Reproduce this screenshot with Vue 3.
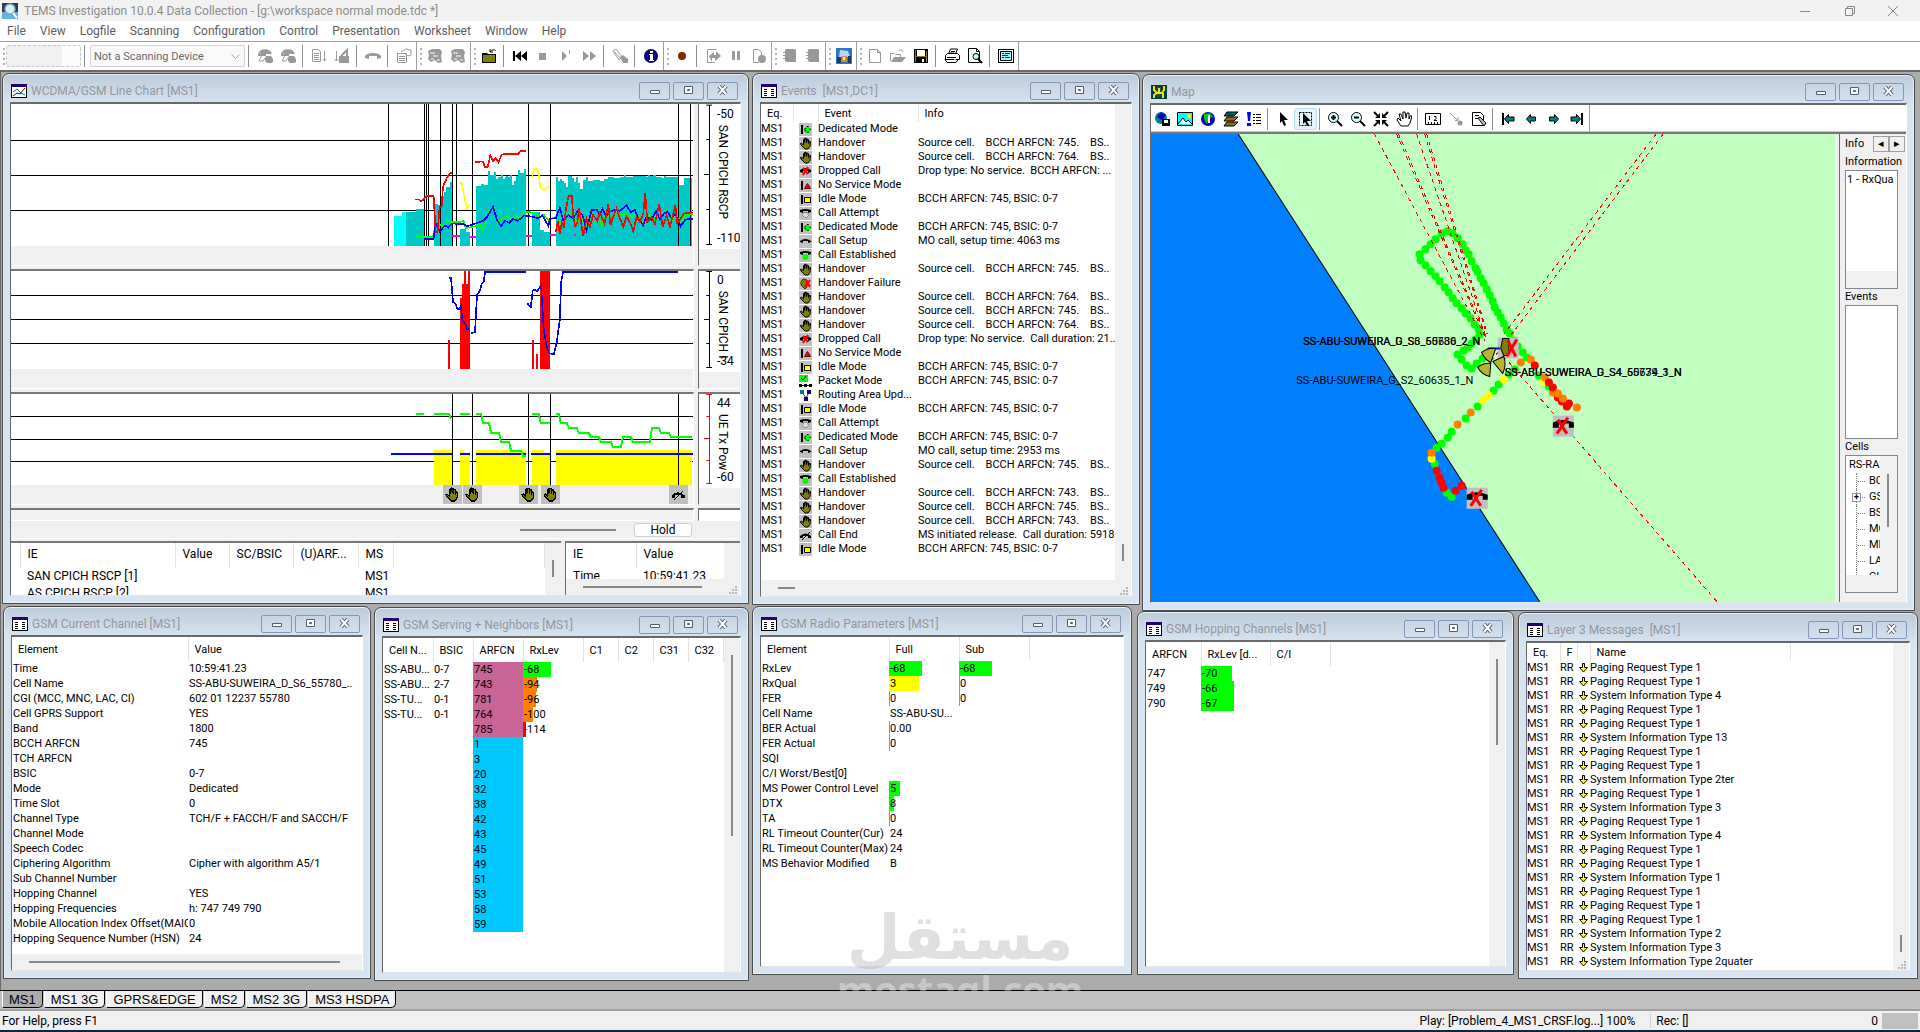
<script setup>
const menus = ['File', 'View', 'Logfile', 'Scanning', 'Configuration', 'Control', 'Presentation', 'Worksheet', 'Window', 'Help']

// Toolbar groups; "|" is a separator line
const toolGroups = [
  ['phone', 'phone', '|', 'doclist', 'doclock', '|', 'handset', '|', 'props'],
  ['phones', 'phones'],
  ['folder', '|', 'rewind', 'stop', 'play', 'forward', '|', 'marker', '|', 'info'],
  ['record', '|', 'swap', 'pause', 'docdot'],
  ['book', 'book'],
  ['picture'],
  ['newdoc', 'open', 'save', '|', 'print', 'preview', '|', 'report'],
]

const windows = [
  { id: 'chart', title: 'WCDMA/GSM Line Chart [MS1]', icon: 'w-chart', x: 2, y: 3, w: 747, h: 531 },
  { id: 'events', title: 'Events  [MS1,DC1]', icon: 'w-list', x: 752, y: 3, w: 388, h: 532 },
  { id: 'map', title: 'Map', icon: 'w-map', x: 1142, y: 4, w: 773, h: 537 },
  { id: 'current', title: 'GSM Current Channel [MS1]', icon: 'w-list', x: 3, y: 536, w: 368, h: 373 },
  { id: 'serving', title: 'GSM Serving + Neighbors [MS1]', icon: 'w-list', x: 374, y: 537, w: 375, h: 374 },
  { id: 'radio', title: 'GSM Radio Parameters [MS1]', icon: 'w-list', x: 752, y: 536, w: 380, h: 369 },
  { id: 'hopping', title: 'GSM Hopping Channels [MS1]', icon: 'w-list', x: 1137, y: 541, w: 377, h: 364 },
  { id: 'layer3', title: 'Layer 3 Messages  [MS1]', icon: 'w-list', x: 1518, y: 542, w: 400, h: 367 },
]

const nb = '\u00a0'
const src = n => `Source cell.${nb}${nb}${nb}${nb}BCCH ARFCN: ${n}.${nb}${nb}${nb}${nb}BS..`
const idle = 'BCCH ARFCN: 745, BSIC: 0-7'
const events = [
  ['e-ded', 'Dedicated Mode', ''],
  ['e-hand', 'Handover', src(745)],
  ['e-hand', 'Handover', src(764)],
  ['e-drop', 'Dropped Call', `Drop type: No service.${nb} BCCH ARFCN: ...`],
  ['e-noserv', 'No Service Mode', ''],
  ['e-idle', 'Idle Mode', idle],
  ['e-attempt', 'Call Attempt', ''],
  ['e-ded', 'Dedicated Mode', idle],
  ['e-setup', 'Call Setup', 'MO call, setup time: 4063 ms'],
  ['e-est', 'Call Established', ''],
  ['e-hand', 'Handover', src(745)],
  ['e-fail', 'Handover Failure', ''],
  ['e-hand', 'Handover', src(764)],
  ['e-hand', 'Handover', src(745)],
  ['e-hand', 'Handover', src(764)],
  ['e-drop', 'Dropped Call', `Drop type: No service.${nb} Call duration: 21...`],
  ['e-noserv', 'No Service Mode', ''],
  ['e-idle', 'Idle Mode', idle],
  ['e-packet', 'Packet Mode', idle],
  ['e-route', 'Routing Area Upd...', ''],
  ['e-idle', 'Idle Mode', idle],
  ['e-attempt', 'Call Attempt', ''],
  ['e-ded', 'Dedicated Mode', idle],
  ['e-setup', 'Call Setup', 'MO call, setup time: 2953 ms'],
  ['e-hand', 'Handover', src(745)],
  ['e-est', 'Call Established', ''],
  ['e-hand', 'Handover', src(743)],
  ['e-hand', 'Handover', src(745)],
  ['e-hand', 'Handover', src(743)],
  ['e-end', 'Call End', `MS initiated release.${nb} Call duration: 5918..`],
  ['e-idle', 'Idle Mode', idle],
]

const current = [
  ['Time', '10:59:41.23'],
  ['Cell Name', 'SS-ABU-SUWEIRA_D_S6_55780_..'],
  ['CGI (MCC, MNC, LAC, CI)', '602 01 12237 55780'],
  ['Cell GPRS Support', 'YES'],
  ['Band', '1800'],
  ['BCCH ARFCN', '745'],
  ['TCH ARFCN', ''],
  ['BSIC', '0-7'],
  ['Mode', 'Dedicated'],
  ['Time Slot', '0'],
  ['Channel Type', 'TCH/F + FACCH/F and SACCH/F'],
  ['Channel Mode', ''],
  ['Speech Codec', ''],
  ['Ciphering Algorithm', 'Cipher with algorithm A5/1'],
  ['Sub Channel Number', ''],
  ['Hopping Channel', 'YES'],
  ['Hopping Frequencies', 'h: 747 749 790'],
  ['Mobile Allocation Index Offset(MAIO)', '0'],
  ['Hopping Sequence Number (HSN)', '24'],
]

const green = '#00ff00'
const serving = [
  ['SS-ABU...', '0-7', 745, -68, 28, green],
  ['SS-ABU...', '2-7', 743, -94, 14, '#ff8000'],
  ['SS-TU...', '0-1', 781, -96, 13, '#ff8000'],
  ['SS-TU...', '0-1', 764, -100, 10, '#ff8000'],
  ['', '', 785, -114, 3, '#ff0000'],
  ...[1, 3, 20, 32, 38, 42, 43, 45, 49, 51, 53, 58, 59].map(n => ['', '', n, '', 0, green]),
]

const radio = [
  { name: 'RxLev', full: '-68', fw: 33, sub: '-68', sw: 33 },
  { name: 'RxQual', full: '3', fw: 30, fc: '#ffff00', sub: '0', sw: 1 },
  { name: 'FER', full: '0', fw: 1, sub: '0', sw: 1 },
  { name: 'Cell Name', full: 'SS-ABU-SU...' },
  { name: 'BER Actual', full: '0.00', fw: 1 },
  { name: 'FER Actual', full: '0', fw: 1 },
  { name: 'SQI' },
  { name: 'C/I Worst/Best[0]' },
  { name: 'MS Power Control Level', full: '5', fw: 11 },
  { name: 'DTX', full: '8', fw: 5 },
  { name: 'TA', full: '0', fw: 1 },
  { name: 'RL Timeout Counter(Cur)', full: '24' },
  { name: 'RL Timeout Counter(Max)', full: '24' },
  { name: 'MS Behavior Modified', full: 'B' },
]

const hopping = [[747, -70, 31], [749, -66, 33], [790, -67, 33]]

const P = 'Paging Request Type 1'
const S = t => 'System Information Type ' + t
const layer3 = [P, P, S(4), P, P, S(13), P, P, S('2ter'), P, S(3), P, S(4), P, P, S(1), P, P, P, S(2), S(3), S('2quater')]

// Chart drawing units: three per pixel
const verticals = [85, 193, 199, 205, 241, 277, 289, 337, 505, 571, 955, 991]
const verticals3 = [277, 337, 505, 571, 955]
const rscpBars = 'M138 468V366H168V357H192V468ZM222 468V342H234V346H240V350H246V318H252V306H258V292H264V290H270V276H276V468ZM300 468V416H318V424H330V468ZM348 468V288H365V282H372V284H384V243H390V255H402V247H408V268H414V262H424V255H430V267H436V262H440V258H446V262H452V256H456V285H462V272H468V258H474V240H480V249H492V237H498V468ZM516 468V367H540V418H552V424H571V468ZM588 468V261H594V272H600V267H606V274H612V278H620V292H625V258H636V263H642V276H648V262H654V280H660V297H668V270H678V262H684V272H700V269H720V274H732V268H745V262H762V264H780V260H792V256H798V260H820V257H858V260H864V255H870V259H880V256H888V260H905V264H912V257H918V262H955V286H972V264H995V468Z'
const redMain = '588,425 594,392 600,430 606,396 612,410 618,360 626,318 636,318 640,380 646,408 652,400 658,355 670,438 680,385 690,410 700,375 712,392 720,368 734,400 745,342 752,405 760,380 770,355 780,385 790,410 800,380 812,400 820,425 830,380 840,395 850,370 856,308 862,395 875,380 885,400 898,342 908,410 920,375 930,410 946,344 952,400 972,370 998,367'
const blueMain = '192,446 222,446 228,400 240,424 256,406 266,412 276,400 312,402 322,408 348,400 370,392 382,380 400,350 412,390 424,408 436,392 448,398 460,386 474,392 494,376 520,380 536,384 548,376 566,408 570,386 588,384 600,352 610,390 625,375 640,385 655,360 668,375 680,420 695,360 710,358 720,372 728,356 738,378 750,365 765,358 780,362 800,346 812,366 825,360 835,385 850,405 860,378 875,390 888,362 900,388 912,370 922,364 935,385 946,370 962,408 976,388 998,386'
const greenMain = '168,440 220,440 228,400 240,402 252,412 262,396 300,396 312,392 318,414 348,408 360,400 370,420 376,396 388,362 404,354 412,394 430,384 444,376 456,392 470,380 480,384 490,364 526,368 540,380 552,374 566,390 588,380 600,402 612,375 625,370 640,366 650,398 665,372 675,415 690,385 705,395 715,380 725,405 740,370 755,395 770,365 785,375 800,372 815,380 830,370 845,398 860,390 870,375 882,395 894,358 908,372 920,362 935,392 946,366 960,402 975,375 998,372'
const txPower = ['168,972 192,972', '222,972 268,972 274,986', '300,972 330,972', '348,972 364,972 370,999 388,999 394,1029 418,1029 424,1056 448,1056 454,1083 484,1083 490,1098 498,1098', '516,972 537,972 543,999 571,999', '588,972 597,972 603,999 621,999 627,1014 651,1014 657,1029 687,1029 693,1041 717,1041 723,1056 753,1056 759,1071 783,1071 789,1041 813,1041 819,1056 870,1056 876,1014 897,1014 903,1029 927,1029 933,1041 996,1041']
const markers = [[277, 'e-hand'], [337, 'e-hand'], [505, 'e-hand'], [571, 'e-hand'], [955, 'e-end']]

// Drive route in survey units, projected onto the map canvas
const project = ([u, v]) => [Math.round((u - 22) / 2.01), Math.round((v - 192) / 3)]
const route = [
  ['#00ff00', [[617, 483], [605, 490], [593, 508], [583, 522], [573, 538], [561, 553], [563, 570], [573, 586], [583, 603], [592, 618], [600, 633], [610, 650], [619, 667], [627, 683], [636, 698], [645, 714], [654, 730], [663, 745], [671, 763], [680, 778], [681, 792], [673, 806], [665, 820], [657, 832], [649, 840], [637, 853], [645, 868], [655, 885], [665, 893], [676, 880], [687, 865], [627, 490], [637, 505], [648, 522], [653, 540], [659, 553], [665, 572], [673, 593], [677, 607], [683, 623], [690, 640], [696, 658], [702, 675], [708, 692], [712, 710], [718, 725], [724, 742], [730, 760], [736, 776], [742, 790], [750, 810], [758, 828], [768, 846], [775, 860], [800, 915], [819, 948], [751, 897], [740, 912], [720, 943], [710, 960], [677, 1009], [653, 1045], [625, 1084], [616, 1101], [605, 1118], [595, 1132], [591, 1180], [615, 1267], [625, 1277]]],
  ['#ffff00', [[809, 933], [729, 928], [699, 976], [687, 991], [585, 1164]]],
  ['#ff8000', [[784, 868], [763, 877], [811, 920], [829, 965], [664, 1027], [638, 1063], [584, 1147], [876, 1012]]],
  ['#ff0000', [[791, 886], [820, 937], [829, 952], [838, 980], [847, 993], [861, 1000], [857, 1009], [595, 1199], [601, 1220], [605, 1235], [609, 1250], [634, 1260], [645, 1246]]],
  ['#ff8000', [[839, 970], [849, 985]]],
]
const dots = route.flatMap(([c, pts]) => pts.map(p => [...project(p), c]))
const links = [[223, 0, 333, 206], [245, 0, 333, 202], [247, 0, 335, 204], [265, 0, 334, 202], [273, 0, 335, 200], [275, 0, 336, 200], [504, 0, 352, 200], [511, 0, 340, 226], [352, 222, 565, 467]]
const dropped = [[401, 281], [315, 353]]
const mapTools = ['m-save', 'm-image', 'm-globe', 'm-layers', 'm-legend', '|', 'm-arrow', 'm-select', '|', 'm-zoomin', 'm-zoomout', 'm-center', 'm-pan', '|', 'm-ruler', 'm-path', 'm-edit', '|', 'm-first', 'm-prev', 'm-next', 'm-last']
const tree = ['RS-RANGE', 'BCCH', 'GSM', 'BSIC', 'MCC', 'MNC', 'LAC', 'CI']
const tabs = ['MS1', 'MS1 3G', 'GPRS&EDGE', 'MS2', 'MS2 3G', 'MS3 HSDPA']
</script>

<template>
  <div class="app">
    <svg class="sprite" aria-hidden="true">
      <symbol id="w-list" viewBox="0 0 16 14"><path fill="#000" d="M0 0h16v14H0z" /><path fill="#23006b" d="M0 0h16v3H0z" /><path fill="#fff" d="M1 3h14v10H1z" /><path stroke="#000" d="M3 5.500h3M3 7.500h3M3 9.500h3M3 11.500h3M10 5.500h3M10 7.500h3M10 9.500h3M10 11.500h3" /></symbol>
      <symbol id="w-chart" viewBox="0 0 16 14"><path fill="#000" d="M0 0h16v14H0z" /><path fill="#23006b" d="M0 0h16v3H0z" /><path fill="#fff" d="M1 3h14v10H1z" /><path fill="none" stroke="#800000" d="M2 12l4-3 3 1 5-6" /><path fill="none" stroke="#008060" d="M2 8l4-3 4 4 4 2" /></symbol>
      <symbol id="w-map" viewBox="0 0 16 14"><path fill="#003c50" d="M0 0h16v14H0z" /><path fill="#006040" d="M6 2h4v10H6z" /><path fill="none" stroke="#ffe000" stroke-width="2" d="M3 1v4l3 3h5l2-3V1M3 13v-3l3-2M8 3v5M12 8v5" /></symbol>
      <symbol id="i-phone" viewBox="0 0 16 16"><path fill="none" stroke="#999" stroke-width="2" d="M2 6c2-5 10-5 12 0" /><path fill="#999" d="M4 3h8l2 3H9v2H1V6h3zM9 8h5l2 3v3l-2 1h-4l-2-2v-3z" /><path stroke="#999" d="M5 7l-3 6h4l2-3" fill="none" /></symbol>
      <symbol id="i-phones" viewBox="0 0 16 16"><path fill="#999" d="M1 3l4-2h8l2 3-1 4 1 6-4 1-3-3-4 2-3-3 1-4z" /><path stroke="#fff" d="M3 5h5M6 8h5M4 11h3M10 12h3" /></symbol>
      <symbol id="i-doclist" viewBox="0 0 16 16"><path fill="none" stroke="#999" d="M1.500 1.500h6l2 2v10h-8zM3 5.500h5M3 7.500h5M3 9.500h5M3 11.500h5M13.500 3v10M11.500 11l2 2 2-2" /></symbol>
      <symbol id="i-doclock" viewBox="0 0 16 16"><path fill="none" stroke="#999" d="M2.500 3v10M.5 11l2 2 2-2" /><path fill="#999" d="M5 8h10v7H5z" /><path fill="none" stroke="#999" stroke-width="2" d="M7 8l6-6v7" /></symbol>
      <symbol id="i-handset" viewBox="0 0 16 16"><path fill="#999" d="M0 10V8c2-4 14-4 16 0v2l-4 1V8H4v3z" /></symbol>
      <symbol id="i-props" viewBox="0 0 16 16"><path fill="none" stroke="#999" d="M1.500 5.500h9v9h-9zM3 8.500h6M3 10.500h6M3 12.500h6M5 4l5-3 5 1v5l-3 1-4-3" /></symbol>
      <symbol id="i-folder" viewBox="0 0 16 16"><path fill="#000" d="M1 5h5l1 1h8v9H1z" /><path fill="#808000" d="M2 7h12v7H2z" /><path fill="none" stroke="#000" d="M9.500 3.500c1-2 4-2 5-1M9 1v3h3" /></symbol>
      <symbol id="i-rewind" viewBox="0 0 16 16"><path d="M1 3h2v10H1zM9 3v10L3 8zM15 3v10L9 8z" /></symbol>
      <symbol id="i-stop" viewBox="0 0 16 16"><path fill="#999" d="M4 5h7v7H4z" /></symbol>
      <symbol id="i-play" viewBox="0 0 16 16"><path fill="#999" d="M4 3l5 5-5 5zM11 2h1v4h-1z" /></symbol>
      <symbol id="i-forward" viewBox="0 0 16 16"><path fill="#999" d="M2 3l6 5-6 5zM9 3l6 5-6 5z" /></symbol>
      <symbol id="i-marker" viewBox="0 0 16 16"><path fill="none" stroke="#999" stroke-width="1" d="M1 3l3-2 6 8-3 3zM3 4l5 6" /><path fill="#999" d="M8 9l3-2 5 4v4h-5z" /></symbol>
      <symbol id="i-info" viewBox="0 0 16 16"><circle cx="8" cy="8" r="7" fill="#0a006e" /><path fill="#fff" d="M7 3h3v2H7zM6 6h4v6h1v1H6v-1h1V7H6z" /></symbol>
      <symbol id="i-record" viewBox="0 0 16 16"><circle cx="8" cy="8" r="4" fill="#802a00" /></symbol>
      <symbol id="i-swap" viewBox="0 0 16 16"><path fill="none" stroke="#999" d="M2.500 14V1.500h9M2 14.500h8" /><path fill="#999" d="M4 8l5-4v3h2V3l5 5-6 5v-3H7v4z" /></symbol>
      <symbol id="i-pause" viewBox="0 0 16 16"><path fill="#999" d="M4 3h3v9H4zM9 3h3v9H9z" /></symbol>
      <symbol id="i-docdot" viewBox="0 0 16 16"><path fill="none" stroke="#999" d="M8 14.500H2.500v-13h5l3 3V8" /><circle cx="11" cy="11" r="4" fill="#999" /></symbol>
      <symbol id="i-book" viewBox="0 0 16 16"><path fill="#999" d="M4 1h9l1 1v12H5l-2-1V2zM1 4h2v1H1zM1 7h2v1H1zM1 10h2v1H1z" /></symbol>
      <symbol id="i-picture" viewBox="0 0 16 16"><path fill="#2b78c8" d="M0 0h16v16H0z" /><path fill="#b4d8f0" d="M4 2l8 1 2 6H3z" /><path fill="#143c64" d="M1 9h4v6H1zM12 8h3v7h-3z" /><path fill="#d88838" d="M6 8h5v6H5z" /><path fill="#fff2b0" d="M7 9h2v3H7z" /></symbol>
      <symbol id="i-newdoc" viewBox="0 0 16 16"><path fill="#fff" stroke="#999" d="M2.500 1.500h8l3 3v10h-11zM10.500 1.500v3h3" /></symbol>
      <symbol id="i-open" viewBox="0 0 16 16"><path fill="none" stroke="#999" d="M.5 13V5.500h4l1 1h5V9M9 3c1-2 4-1 4 1" /><path fill="#999" d="M4 9h12l-4 5H1z" /></symbol>
      <symbol id="i-save" viewBox="0 0 16 16"><path d="M1 1h14v14H1z" /><path fill="#808000" d="M2 2h1v12H2zM13 3h1v11h-1zM3 8h10v1H3z" /><path fill="#fff" d="M4 2h8v6H4zM9 11h2v3H9z" /></symbol>
      <symbol id="i-print" viewBox="0 0 16 16"><path fill="#fff" stroke="#000" d="M4.500 6l2-5h7l-2 5M1.500 7.500l2-2h10l2 2v4h-14zM3 14.500h9l2-3H1z" /><path stroke="#000" d="M7 3.500h4M6 5h4M3 9.500h9" /><path fill="#cc0" d="M10 11h2v1h-2z" /></symbol>
      <symbol id="i-preview" viewBox="0 0 16 16"><path fill="#fff" stroke="#000" d="M1.500.5h8l3 3v11h-11zM9.500.5v3h3" /><circle cx="9" cy="8.500" r="3" fill="#bff" stroke="#000" /><path stroke="#000" stroke-width="2" d="M11 11l4 4" /></symbol>
      <symbol id="i-report" viewBox="0 0 16 16"><path fill="#000" d="M0 1h16v14H0z" /><path fill="#fff" d="M1 2h14v12H1z" /><path fill="#9ff" stroke="#000" d="M2.500 3.500h11v9h-11z" /><path stroke="#003c3c" d="M4 5.500h2M7 5.500h5M4 7.500h6M4 9.500h2M7 9.500h5" /></symbol>

      <symbol id="e-ded" viewBox="0 0 13 13"><path fill="#000" d="M2 2h2v9H2z" /><path fill="#0f0" d="M5 6.500L6.500 4h3L12 6.500 9.500 10h-3z" /><path fill="none" stroke="#000" stroke-dasharray="2 2" d="M5.500 6.500l2-3h2l2 3-2 3h-2z" /></symbol>
      <symbol id="e-hand" viewBox="0 0 13 13"><path fill="#808000" stroke="#000" d="M4.500 8V2.500l1-1v4l1-4.500 1 .5v4l1-3.500 1 .5v4l1-2.500 1 .5-.5 5-2 2.500h-3L2 8l-.5-1.500 1-.5z" /></symbol>
      <symbol id="e-drop" viewBox="0 0 13 13"><path fill="#000" d="M1 7V5q5.500-4 11 0v2l-3 1V6H4v2z" /><path stroke="#f00" stroke-width="2" fill="none" d="M4 10l5-8M4 3l5 6" /></symbol>
      <symbol id="e-noserv" viewBox="0 0 13 13"><path d="M2 2h2v9H2z" /><path fill="#f00" stroke="#600" d="M8.500 4.500l3 5h-6z" /></symbol>
      <symbol id="e-idle" viewBox="0 0 13 13"><path d="M2 2h2v9H2z" /><path fill="#ff0" stroke="#000" d="M5.500 4.500h6v5h-6z" /></symbol>
      <symbol id="e-attempt" viewBox="0 0 13 13"><path d="M1 5V3q5.500-2 11 0v2L9 6V4H4v2z" /><path fill="#ddd" stroke="#888" d="M4.500 5.500h4l1 3-2 2h-2l-2-2z" /></symbol>
      <symbol id="e-setup" viewBox="0 0 13 13"><path d="M1 7V6q5.500-4 11 0v1L9 8V6H4v2z" /></symbol>
      <symbol id="e-est" viewBox="0 0 13 13"><path d="M1 5V3q5.500-2 11 0v2L9 6V4H4v2z" /><circle cx="6.500" cy="8" r="3" fill="#0f0" /></symbol>
      <symbol id="e-fail" viewBox="0 0 13 13"><path fill="#808000" stroke="#330" d="M2 8V5l2-3 4 1v7l-2 2z" /><path stroke="#f00" stroke-width="2" d="M6 10l5-7M7 3l4 7" /></symbol>
      <symbol id="e-packet" viewBox="0 0 13 13"><path fill="#fff" d="M0 0h13v13H0z" /><path fill="#0f0" d="M0 0h9v7H0z" /><path fill="none" stroke="#000" d="M2 3l2 2 3-4M0 10.500h13" /><path d="M0 9h3v3H0zM5 9h3v3H5zM10 9h3v3h-3z" /></symbol>
      <symbol id="e-route" viewBox="0 0 13 13"><path fill="#fff" d="M0 0h13v13H0z" /><path stroke="#333" d="M3 3l4 6 3-6" fill="none" /><path fill="#008060" d="M1 1h4v4H1z" /><path fill="#0a0080" d="M8 1h4v4H8zM5 8h4v4H5z" /></symbol>
      <symbol id="e-end" viewBox="0 0 13 13"><path d="M1 9V7q5.500-5 11 0v2L9 9V7H4v2z" /><path stroke="#000" d="M3 11l8-8" /></symbol>

      <symbol id="m-save" viewBox="0 0 16 16"><circle cx="7" cy="7" r="6" fill="#008080" /><path fill="#00c" d="M3 6l4-5 5 3-4 5z" /><path fill="#000" d="M8 8h8v7H8z" /><path fill="#fff" d="M10 9h4v3h-4z" /></symbol>
      <symbol id="m-image" viewBox="0 0 16 16"><path fill="#0ff" stroke="#000" d="M.5 1.500h15v13H.5z" /><circle cx="12" cy="5" r="2" fill="#ff0" /><path fill="#fff" stroke="#000" d="M1 13l5-6 3 4 2-2 4 4" /></symbol>
      <symbol id="m-globe" viewBox="0 0 16 16"><circle cx="8" cy="8" r="7" fill="#0000d0" /><path fill="#0c0" d="M4 3l6-1 3 4-4 1-2 6-3-5z" /><path fill="#fff" d="M8 4h2v8H8z" /></symbol>
      <symbol id="m-layers" viewBox="0 0 16 16"><path fill="#006060" stroke="#000" d="M4 1h11l-4 4H1z" /><path fill="#b06010" stroke="#000" d="M4 6h11l-4 4H1z" /><path fill="#807020" stroke="#000" d="M4 11h11l-4 4H1z" /></symbol>
      <symbol id="m-legend" viewBox="0 0 16 16"><path fill="#00f" d="M1 1h4l-1 9H2zM1 12h4v3H1z" /><path stroke="#000" stroke-dasharray="2 1 8" d="M7 3.500h8M7 6.500h8M7 9.500h8M7 12.500h8" /></symbol>
      <symbol id="m-arrow" viewBox="0 0 16 16"><path d="M5 1l8 8H9l2 5-2 1-2-5-2 2z" /></symbol>
      <symbol id="m-select" viewBox="0 0 16 16"><path fill="none" stroke="#000" stroke-dasharray="2 1" d="M1.500 1.500h12v13h-12z" /><path d="M5 2l8 8H9l2 4-2 1-2-4-2 2z" /></symbol>
      <symbol id="m-zoomin" viewBox="0 0 16 16"><circle cx="6.500" cy="6.500" r="5" fill="#dff" stroke="#000" /><path stroke="#000" stroke-width="2" d="M10 10l5 5M4 6.500h5M6.500 4v5" /></symbol>
      <symbol id="m-zoomout" viewBox="0 0 16 16"><circle cx="6.500" cy="6.500" r="5" fill="#dff" stroke="#000" /><path stroke="#000" stroke-width="2" d="M10 10l5 5M4 6.500h5" /></symbol>
      <symbol id="m-center" viewBox="0 0 16 16"><path stroke="#000" stroke-width="2" d="M1 1l5 5M15 1l-5 5M1 15l5-5M15 15l-5-5" /><path d="M7 7H2l5-5zM9 7V2l5 5zM7 9v5L2 9zM9 9h5l-5 5z" /></symbol>
      <symbol id="m-pan" viewBox="0 0 16 16"><path fill="#fff" stroke="#000" d="M5 15L1 9l1-2 3 3-2-7h2l2 5V1h2l1 6 1-5h2v6l1-3h2l-2 7-2 3z" /></symbol>
      <symbol id="m-ruler" viewBox="0 0 16 16"><path fill="#fff" stroke="#000" d="M.5 2.500h15v11H.5zM3.500 13v-2M6.500 13v-2M9.500 13v-2M12.500 13v-2M4.500 5v4M9 5.500h2v2l-2 2h3" /></symbol>
      <symbol id="m-path" viewBox="0 0 16 16"><path fill="none" stroke="#999" d="M2 2l8 8M7 9.500h3V6" /><circle cx="12" cy="12" r="2.500" fill="#999" /></symbol>
      <symbol id="m-edit" viewBox="0 0 16 16"><path fill="#fff" stroke="#000" d="M1.500 1.500h8l3 3v10h-11zM4 4.500h4M4 7.500h3" /><path fill="#bbb" stroke="#000" d="M7 7l2-1 6 6-2 3z" /></symbol>
      <symbol id="m-first" viewBox="0 0 16 16"><path d="M2 2h2v12H2z" /><path fill="#008080" stroke="#000" d="M4.500 8l4-4.500V6H14v4H8.500v2.500z" /></symbol>
      <symbol id="m-prev" viewBox="0 0 16 16"><path fill="#008080" stroke="#000" d="M3.500 8l4-4.500V6h5v4h-5v2.500z" /></symbol>
      <symbol id="m-next" viewBox="0 0 16 16"><path fill="#008080" stroke="#000" d="M12.500 8l-4-4.500V6h-5v4h5v2.500z" /></symbol>
      <symbol id="m-last" viewBox="0 0 16 16"><path d="M12 2h2v12h-2z" /><path fill="#008080" stroke="#000" d="M11.500 8l-4-4.500V6H2v4h5.500v2.500z" /></symbol>
    </svg>

    <header class="titlebar">
      <svg class="logo" viewBox="0 0 16 16"><path fill="#2a3a58" d="M0 0h16v16H0z" /><path fill="#6ab0e8" d="M0 9h16v7H0z" /><circle cx="8" cy="6" r="5" fill="#d6f0ff" stroke="#8aa" stroke-width="1.500" /><path stroke="#fff" stroke-width="2" d="M11 10l4 5" /></svg>
      <h1>TEMS Investigation 10.0.4 Data Collection - [g:\workspace normal mode.tdc *]</h1>
      <div class="sysbtns">
        <button aria-label="Minimize"><svg viewBox="0 0 10 10"><path stroke="#888" d="M0 5.500h10" /></svg></button>
        <button aria-label="Restore"><svg viewBox="0 0 10 10"><path fill="none" stroke="#888" d="M.5 2.500h7v7h-7zM2.500 2V.5h7v7H8" /></svg></button>
        <button aria-label="Close"><svg viewBox="0 0 10 10"><path stroke="#888" d="M0 0l10 10M10 0L0 10" /></svg></button>
      </div>
    </header>

    <nav class="menubar"><a v-for="m in menus" :key="m" href="#">{{ m }}</a></nav>

    <div class="toolbar">
      <div class="group">
        <span class="grip"></span>
        <select class="device" disabled aria-label="Equipment"><option></option></select>
        <span class="sep"></span>
        <div class="combo">
          <select class="scanner" disabled aria-label="Scanning device"><option>Not a Scanning Device</option></select>
          <svg viewBox="0 0 9 5"><path fill="none" stroke="#a8a8a8" d="M.5.5l4 4 4-4" /></svg>
        </div>
        <span class="sep"></span>
        <template v-for="(t, i) in toolGroups[0]" :key="i">
          <span v-if="t === '|'" class="sep"></span>
          <button v-else class="tool" :aria-label="t"><svg><use :href="'#i-' + t" /></svg></button>
        </template>
      </div>
      <div v-for="(g, k) in toolGroups.slice(1)" :key="k" class="group">
        <span class="grip"></span>
        <template v-for="(t, i) in g" :key="i">
          <span v-if="t === '|'" class="sep"></span>
          <button v-else class="tool" :aria-label="t"><svg><use :href="'#i-' + t" /></svg></button>
        </template>
      </div>
    </div>

    <main class="desktop">
      <section v-for="w in windows" :key="w.id" class="window" :style="{ left: w.x + 'px', top: w.y + 'px', width: w.w + 'px', height: w.h + 'px' }">
        <header class="caption">
          <svg class="wicon"><use :href="'#' + w.icon" /></svg>
          <h2>{{ w.title }}</h2>
          <button aria-label="Minimize"><svg viewBox="0 0 13 11"><path fill="#fff" stroke="#555e70" d="M2.500 5.500h9v3h-9z" /></svg></button>
          <button aria-label="Maximize"><svg viewBox="0 0 13 11"><path fill="#fff" stroke="#555e70" d="M2.500 1.500h8v7h-8zM5.500 4.500h2v1h-2z" /></svg></button>
          <button aria-label="Close"><svg viewBox="0 0 13 11"><path stroke="#555e70" stroke-width="4" d="M3 1l7 8M10 1L3 9" /><path stroke="#fff" stroke-width="2" d="M3 1l7 8M10 1L3 9" /></svg></button>
        </header>

        <div v-if="w.id === 'chart'" class="client chart">
          <div class="panel">
            <div class="pane plot">
              <svg class="p1" viewBox="-1044 42 2043 426" preserveAspectRatio="xMaxYMin slice">
                <g stroke="#000" stroke-width="3"><path d="M-1044 151.500H999M-1044 256.500H999M-1044 361.500H999" /></g>
                <path fill="#00ffff" d="M102 468V378H126V366H138V468Z" />
                <path fill="#00c8c8" :d="rscpBars" />
                <g stroke="#000" stroke-width="3"><path v-for="v in verticals" :key="v" :d="'M' + (v + .5) + ' 42V468'" /></g>
                <g fill="none" stroke-width="5">
                  <polyline stroke="#00ff00" :points="greenMain" />
                  <polyline stroke="#0000ff" :points="blueMain" />
                  <polyline stroke="#ff0000" :points="redMain" />
                  <polyline stroke="#ff0000" points="166,328 178,328 184,333 190,330 200,318 222,318 228,425 234,425 240,350 246,350 250,290 262,262 270,250 276,248" />
                  <polyline stroke="#ff0000" points="346,216 370,214 376,232 384,230 392,196 400,214 408,204 416,216 426,194 440,191 476,191 482,183 498,183" />
                  <polyline stroke="#ffff00" points="300,276 306,280 322,354 328,344" />
                  <polyline stroke="#ffff00" points="517,260 524,234 534,238 542,292 552,300 568,288" />
                  <path stroke="#ff00ff" d="M276 438H300M330 441H348M498 438H516M570 435H588M642 435H648" />
                </g>
              </svg>
            </div>
            <div class="pane axis">
              <svg class="a1" viewBox="1017 42 123 435"><path fill="none" stroke="#000" stroke-width="3" d="M1039 45.500H1056M1048.500 45V463M1039 463.500H1056M1039 148.500H1048M1032 253.500H1048M1039 358.500H1048" /><text x="1071" y="84">-50</text><text transform="translate(1076 104) rotate(90)">SAN CPICH RSCP</text><text x="1071" y="456">-110</text></svg>
            </div>
          </div>
          <div class="panel">
            <div class="pane plot">
              <svg class="p2" viewBox="-1044 543 2043 294" preserveAspectRatio="xMaxYMin slice">
                <path stroke="#000" stroke-width="3" d="M-1044 616.500H999M-1044 688.500H999M-1044 760.500H999" />
                <path fill="#ff0000" d="M264 750h6v87h-6zM300 837V625H306V583H312V543H318V583H324V543H330V837ZM516 750h6v87h-6zM528 792h6v45h-6zM540 543h30v294h-30z" />
                <g fill="none" stroke="#0000ff" stroke-width="5">
                  <polyline points="267,564 274,564 280,636 287,640 293,656 299,657 304,648 308,690 316,700 322,716 329,717" />
                  <polyline points="334,730 346,726 352,614 360,604 366,582 372,576 376,546 498,546" />
                  <polyline points="503,640 513,652 519,602 526,598 532,604 544,586 552,720 560,765 568,790 582,792 590,762 600,690 604,575 610,546 955,546" />
                </g>
              </svg>
            </div>
            <div class="pane axis">
              <svg class="a2" viewBox="1017 543 123 303"><path fill="none" stroke="#000" stroke-width="3" d="M1039 544.500H1056M1048.500 543V832M1039 832.500H1056M1039 616.500H1048M1032 688.500H1048M1039 760.500H1048" /><text x="1071" y="582">0</text><text transform="translate(1076 602) rotate(90)">SAN CPICH I</text><text x="1071" y="825">-34</text></svg>
            </div>
          </div>
          <div class="panel">
            <div class="pane plot">
              <svg class="p3" viewBox="-1044 912 2043 330" preserveAspectRatio="xMaxYMin slice">
                <path fill="#f0f0f0" d="M-1044 1185H999V1242H-1044Z" />
                <path stroke="#000" stroke-width="3" d="M-1044 979.500H999M-1044 1048.500H999M-1044 1114.500H999" />
                <path fill="#ffff00" d="M222 1080h54v105h-54zM300 1080h12v9h18v96h-30zM348 1080h150v105h-150zM516 1080h36v9h18v96h-54zM588 1080h408v105h-408z" />
                <g stroke="#000" stroke-width="3"><path v-for="v in verticals3" :key="v" :d="'M' + (v + .5) + ' 912V1185'" /></g>
                <path stroke="#0000ff" stroke-width="6" d="M93 1092H276M300 1092H330M348 1092H498M514 1092H571M588 1092H999" />
                <g fill="none" stroke="#00ff00" stroke-width="6"><polyline v-for="p in txPower" :key="p" :points="p" /></g>
                <g v-for="m in markers" :key="m[0]"><rect :x="m[0] - 28" y="1185" width="57" height="57" fill="#c0c0c0" /><use :href="'#' + m[1]" :x="m[0] - 23" y="1191" width="45" height="45" /></g>
              </svg>
            </div>
            <div class="pane axis">
              <svg class="a3" viewBox="1017 912 123 282"><path fill="none" stroke="#ff0000" stroke-width="3" d="M1039 913.500H1056M1048.500 912V1180M1039 1180.500H1056M1039 979.500H1048M1032 1045.500H1048M1039 1111.500H1048" /><text x="1071" y="951">44</text><text transform="translate(1076 972) rotate(90)">UE Tx Pow</text><text x="1071" y="1172">-60</text></svg>
            </div>
          </div>
          <div class="panel strip"><div class="pane plot"></div><div class="pane axis white"></div></div>
          <div class="holdrow"><span class="thumb h"></span><button>Hold</button></div>
          <div class="lists">
            <div class="list left">
              <table class="seg">
                <colgroup><col class="c9"><col class="c155"><col class="c54"><col class="c64"><col class="c65"><col class="c35"><col></colgroup>
                <thead><tr><th></th><th>IE</th><th>Value</th><th>SC/BSIC</th><th>(U)ARF...</th><th>MS</th><th></th></tr></thead>
                <tbody>
                  <tr><td></td><td>SAN CPICH RSCP [1]</td><td></td><td></td><td></td><td>MS1</td><td></td></tr>
                  <tr><td></td><td>AS CPICH RSCP [2]</td><td></td><td></td><td></td><td>MS1</td><td></td></tr>
                </tbody>
              </table>
              <div class="vscroll"><span class="thumb short"></span></div>
            </div>
            <div class="list right">
              <div class="inner">
                <table class="seg"><colgroup><col class="c70"><col></colgroup>
                  <thead><tr><th>IE</th><th class="last">Value</th></tr></thead>
                  <tbody><tr><td>Time</td><td>10:59:41.23</td></tr></tbody>
                </table>
              </div>
              <div class="hscroll"><span class="thumb h"></span><svg class="sizer" viewBox="0 0 9 9"><path fill="#b8b8b8" d="M6 0h2v2H6zM3 3h2v2H3zM6 3h2v2H6zM0 6h2v2H0zM3 6h2v2H3zM6 6h2v2H6z" /></svg></div>
            </div>
          </div>
        </div>

        <div v-else-if="w.id === 'events'" class="client column">
          <div class="body">
            <table class="dense">
              <colgroup><col class="c32"><col class="c25"><col class="c100"><col></colgroup>
              <thead><tr><th>Eq.</th><th></th><th>Event</th><th class="last">Info</th></tr></thead>
              <tbody><tr v-for="(e, i) in events" :key="i"><td>MS1</td><td class="ic"><svg><use :href="'#' + e[0]" /></svg></td><td>{{ e[1] }}</td><td>{{ e[2] }}</td></tr></tbody>
            </table>
            <div class="vscroll"><span class="thumb evt"></span></div>
          </div>
          <div class="hscroll evt"><span class="thumb h"></span><svg class="sizer" viewBox="0 0 9 9"><path fill="#b8b8b8" d="M6 0h2v2H6zM3 3h2v2H3zM6 3h2v2H6zM0 6h2v2H0zM3 6h2v2H3zM6 6h2v2H6z" /></svg></div>
        </div>

        <div v-else-if="w.id === 'map'" class="client column mapwin">
          <div class="maptools">
            <div class="mapgroup">
              <template v-for="(t, i) in mapTools" :key="i">
                <span v-if="t === '|'" class="sep"></span>
                <button v-else class="tool" :class="{ on: t === 'm-select' }" :aria-label="t.slice(2)"><svg><use :href="'#' + t" /></svg></button>
              </template>
            </div>
          </div>
          <div class="mapbody">
            <svg class="mapcanvas" viewBox="0 0 683 467" preserveAspectRatio="xMinYMin slice">
              <path fill="#c0ffc0" d="M0 0h683v468H0z" />
              <path fill="#0080ff" d="M0 0H87L388 467v1H0z" /><path stroke="#000" d="M87 0L388 467" />
              <circle v-for="(d, i) in dots" :key="i" :cx="d[0]" :cy="d[1]" r="4" :fill="d[2]" />
              <g shape-rendering="crispEdges"><path v-for="(l, i) in links" :key="i" :d="`M${l[0]} ${l[1]}L${l[2]} ${l[3]}`" stroke="#ff0000" stroke-dasharray="4 4" /></g>
              <path fill="#c0c0c0" d="M346 203h21v21h-21z" /><path fill="#808000" stroke="#000" d="M349 214l2-10h6v17h-5z" /><path stroke="#f00" stroke-width="3" d="M355 222l10-17M356 206l8 16" />
              <path stroke="#0000ff" stroke-width="2" d="M336 214h12" />
              <path fill="#b8b432" stroke="#000" d="M330 218q6-5 14-4l-5 14q-6-3-9-10zM341 227l11-5q3 8-1 17zM326 233q6-5 13-4l-1 13q-8-2-12-9z" />
              <g v-for="p in dropped" :key="p[0]"><rect :x="p[0]" :y="p[1]" width="21" height="21" fill="#c0c0c0" /><path :transform="`translate(${p[0]} ${p[1]})`" d="M0 12V7q10-5 21 0v5h-5V8H6v4z" /><path :transform="`translate(${p[0]} ${p[1]})`" stroke="#f00" stroke-width="3" d="M4 18L15 2M5 4l9 14" /></g>
              <g class="maptext"><text x="152" y="211">SS-ABU-SUWEIRA_D_S6_55780_2_N</text><text x="152" y="211">SS-ABU-SUWEIRA_G_S3_60636_2_N</text><text x="145" y="249">SS-ABU-SUWEIRA_G_S2_60635_1_N</text><text x="353" y="241">SS-ABU-SUWEIRA_D_S4_55779_3_N</text><text x="353" y="241">SS-ABU-SUWEIRA_G_S4_60634_1_N</text></g>
            </svg>
            <aside class="side">
              <div class="sidetab"><span>Info</span><button aria-label="Previous tab">◂</button><button aria-label="Next tab">▸</button></div>
              <h3>Information</h3>
              <div class="box b1"><p>1 - RxQua</p><i></i></div>
              <h3>Events</h3>
              <div class="box b2"></div>
              <h3>Cells</h3>
              <div class="box b3">
                <div class="treerow"><ul><li v-for="(t, i) in tree" :key="t" :class="{ root: i === 0 }"><b v-if="i === 2">+</b>{{ t }}</li></ul><span class="thumb tree"></span></div>
                <i></i>
              </div>
            </aside>
          </div>
        </div>

        <div v-else-if="w.id === 'current'" class="client column">
          <div class="body">
            <table><colgroup><col class="c176"><col></colgroup>
              <thead><tr><th>Element</th><th class="last">Value</th></tr></thead>
              <tbody><tr v-for="r in current" :key="r[0]"><td>{{ r[0] }}</td><td>{{ r[1] }}</td></tr></tbody>
            </table>
          </div>
          <div class="hscroll cur"><span class="thumb h"></span></div>
        </div>

        <div v-else-if="w.id === 'serving'" class="client column">
          <div class="body">
            <table><colgroup><col class="c50"><col class="c40"><col class="c50"><col class="c60"><col class="c35"><col class="c35"><col class="c35"><col class="c35"><col></colgroup>
              <thead><tr><th>Cell N...</th><th>BSIC</th><th>ARFCN</th><th>RxLev</th><th>C1</th><th>C2</th><th>C31</th><th>C32</th><th class="last"></th></tr></thead>
              <tbody><tr v-for="(r, i) in serving" :key="r[2]"><td>{{ r[0] }}</td><td>{{ r[1] }}</td><td :class="i < 5 ? 'mauve' : 'sky'">{{ r[2] }}</td><td><span v-if="r[4]" class="bar" :style="{ width: r[4] + 'px', background: r[5] }">{{ r[3] }}</span></td><td colspan="5"></td></tr></tbody>
            </table>
            <div class="vscroll"><span class="thumb srv"></span></div>
          </div>
        </div>

        <div v-else-if="w.id === 'radio'" class="client column">
          <div class="body">
            <table><colgroup><col class="c128"><col class="c70"><col class="c70"><col></colgroup>
              <thead><tr><th>Element</th><th>Full</th><th>Sub</th><th class="last"></th></tr></thead>
              <tbody><tr v-for="r in radio" :key="r.name"><td>{{ r.name }}</td>
                <td><span v-if="r.full" class="bar" :style="{ width: (r.fw || 0) + 'px', background: r.fc || green }">{{ r.full }}</span></td>
                <td><span v-if="r.sub" class="bar" :style="{ width: r.sw + 'px', background: green }">{{ r.sub }}</span></td><td></td></tr></tbody>
            </table>
          </div>
        </div>

        <div v-else-if="w.id === 'hopping'" class="client column">
          <div class="body">
            <table><colgroup><col class="c55"><col class="c69"><col class="c60"><col></colgroup>
              <thead><tr><th>ARFCN</th><th>RxLev [d...</th><th>C/I</th><th class="last"></th></tr></thead>
              <tbody><tr v-for="r in hopping" :key="r[0]"><td>{{ r[0] }}</td><td><span class="bar" :style="{ width: r[2] + 'px', background: green }">{{ r[1] }}</span></td><td></td><td></td></tr></tbody>
            </table>
            <div class="vscroll"><span class="thumb hop"></span></div>
          </div>
        </div>

        <div v-else class="client column">
          <div class="body">
            <table class="dense"><colgroup><col class="c33"><col class="c17"><col class="c13"><col class="c200"><col></colgroup>
              <thead><tr><th>Eq.</th><th>F</th><th></th><th>Name</th><th class="last"></th></tr></thead>
              <tbody><tr v-for="(m, i) in layer3" :key="i"><td>MS1</td><td>RR</td><td class="arrow"><svg viewBox="0 0 10 10"><path fill="#ff0" stroke="#000" d="M3.500.5h2v4h3L4.500 9l-4-4.500h3z" /></svg></td><td>{{ m }}</td><td></td></tr></tbody>
            </table>
            <div class="vscroll lay"><span class="thumb lay"></span><svg class="sizer" viewBox="0 0 9 9"><path fill="#b8b8b8" d="M6 0h2v2H6zM3 3h2v2H3zM6 3h2v2H6zM0 6h2v2H0zM3 6h2v2H3zM6 6h2v2H6z" /></svg></div>
          </div>
        </div>
      </section>

      <div class="watermark"><strong lang="ar" dir="rtl">مستقل</strong><em>mostaql.com</em></div>
    </main>

    <nav class="tabs"><button v-for="(t, i) in tabs" :key="t" :class="{ active: i === 0 }">{{ t }}</button></nav>

    <footer class="status">
      <span class="help">For Help, press F1</span><span>Play: [Problem_4_MS1_CRSF.log...] 100%</span><span class="rec">Rec: []</span><span class="num">0</span><span class="block"></span>
    </footer>
  </div>
</template>

<style>
body { background: #ababab; overflow: hidden; }
</style>

<style scoped>
.app { display: flex; flex-direction: column; min-height: 100vh; font-family: Roboto, "Noto Sans", sans-serif; font-size: 12px; color: #000; }
.app *, .app { box-sizing: border-box; }
.sprite { position: absolute; width: 0; height: 0; }
button { font: inherit; padding: 0; margin: 0; border: 0; background: none; color: inherit; }
h1, h2, h3, p, ul { margin: 0; padding: 0; font-weight: normal; font-size: inherit; }
svg { display: block; }

.titlebar { display: flex; align-items: center; height: 21px; background: #f2f2f2; padding: 0 16px 0 2px; color: #8c8c8c; }
.logo { width: 16px; height: 16px; margin-right: 6px; }
.titlebar h1 { flex: 1; line-height: 18px; }
.sysbtns { display: flex; height: 18px; }
.sysbtns button { width: 45px; display: flex; justify-content: center; align-items: center; }
.sysbtns svg { width: 10px; height: 10px; }
.sysbtns button:last-child { width: 42px; margin-right: -10px; }
.menubar { display: flex; gap: 14px; height: 20px; padding-left: 7px; background: #fff; }
.menubar a { color: #5a6064; text-decoration: none; line-height: 20px; }

.toolbar { display: flex; height: 29px; background: #fff; border-top: 1px solid #a0a0a0; }
.group { display: flex; align-items: center; height: 28px; border-right: 1px solid #a0a0a0; padding-right: 1px; }
.grip { width: 6px; height: 17px; background: repeating-linear-gradient(#b4b4b4 0 2px, #fff 2px 5px) 3px 0 / 2px 100% no-repeat; }
.tool { width: 23px; height: 22px; display: flex; align-items: center; justify-content: center; }
.tool svg { width: 16px; height: 16px; }
.sep { width: 1px; height: 22px; margin: 0 4px 0 3px; background: #8c8c96; }
select { appearance: none; font: inherit; font-size: 11px; opacity: 1; border-radius: 2px; }
.device { width: 75px; height: 22px; border: 1px dashed #c8c8c8; background: linear-gradient(90deg, #f0f0f0 75%, #fcfcfc 75%); }
.scanner { width: 155px; height: 22px; border: 1px solid #d4d4d4; background: #f9f9f9; color: #6a6a6a; padding: 0 3px; }
.combo { display: grid; align-items: center; margin-left: 1px; }
.combo > * { grid-area: 1 / 1; }
.combo svg { width: 9px; height: 5px; justify-self: end; margin-right: 5px; }

.desktop { position: relative; flex: 1; background: #ababab; border-top: 2px solid #696969; border-left: 1px solid #696969; }
.window { position: absolute; margin: -2px 0 0 -1px; border: 1px solid #4a4a4a; border-radius: 7px 7px 0 0; background: linear-gradient(#bccbda, #d7e4f2 30px); box-shadow: inset 0 0 0 1px #e6f0fa; padding: 0 7px 7px; display: flex; flex-direction: column; }
.caption { display: flex; align-items: center; height: 28px; padding-top: 5px; flex: none; }
.wicon { width: 16px; height: 14px; margin: 0 4px 0 1px; }
.caption h2 { flex: 1; color: #94989e; white-space: pre; line-height: 16px; }
.caption button { width: 31px; height: 18px; margin-left: 3px; border: 1px solid #8596b8; border-radius: 2px; background: linear-gradient(#c6d4e4, #d2e0ee); display: flex; align-items: center; justify-content: center; }
.caption button:last-child { margin-right: 3px; }
.caption button svg { width: 13px; height: 11px; }
.client { flex: 1; min-height: 0; border: 1px solid #e6e6e6; border-left-color: #696969; border-top: 2px solid #696969; border-right-color: #fff; background: #fff; overflow: hidden; font-size: 11px; }
.column { display: flex; flex-direction: column; }
.body { display: flex; flex: 1; min-height: 0; }
.body table { flex: 1; align-self: flex-start; }

table { table-layout: fixed; border-collapse: collapse; width: 100%; }
th { font-weight: normal; text-align: left; height: 24px; padding: 1px 0 0 6px; border-right: 1px solid #e2e2e2; white-space: nowrap; line-height: 15px; }
th.last { border-right: 0; }
td { height: 15px; line-height: 15px; padding: 0 0 0 1px; white-space: nowrap; overflow: hidden; }
.dense th { height: 18px; }
.dense td { height: 14px; line-height: 14px; padding-left: 0; }
.dense .ic { padding-left: 6px; }
.dense .arrow { padding-left: 2px; }
.ic svg { width: 13px; height: 13px; background: #c0c0c0; }
.arrow svg { width: 10px; height: 10px; }
.bar { display: block; height: 15px; margin-left: -1px; text-indent: 1px; overflow: visible; white-space: nowrap; }
.mauve { background: #c86496; }
.sky { background: #00c8ff; }
.c9 { width: 9px; } .c13 { width: 13px; } .c17 { width: 17px; } .c25 { width: 25px; } .c32 { width: 32px; } .c33 { width: 33px; } .c35 { width: 35px; } .c40 { width: 40px; } .c50 { width: 50px; } .c54 { width: 54px; } .c55 { width: 55px; } .c60 { width: 60px; } .c64 { width: 64px; } .c65 { width: 65px; } .c69 { width: 69px; } .c70 { width: 70px; } .c100 { width: 100px; } .c128 { width: 128px; } .c155 { width: 155px; } .c176 { width: 176px; } .c200 { width: 200px; }

.vscroll { width: 16px; background: #f0f0f0; flex: none; }
.vscroll.lay { display: flex; flex-direction: column; justify-content: space-between; }
.hscroll { height: 16px; background: #f0f0f0; flex: none; display: flex; align-items: center; justify-content: space-between; }
.sizer { width: 9px; height: 9px; margin: 2px 2px 0 0; align-self: flex-end; }
.thumb { display: block; width: 2px; margin-left: 7px; background: #888; }
.thumb.h { height: 2px; margin: 0; }
.thumb.evt { height: 17px; margin-top: 440px; }
.thumb.srv { height: 181px; margin-top: 17px; }
.thumb.hop { height: 86px; margin-top: 17px; }
.thumb.lay { height: 17px; margin-top: 292px; }
.hscroll.evt .h { width: 17px; margin-left: 17px; }
.hscroll.cur .h { width: 311px; margin-left: 17px; }

.chart { background: #f0f0f0; }
.panel { display: flex; gap: 4px; margin-bottom: 3px; }
.pane { border-bottom: 1px solid #fff; }
.panel + .panel .pane { border-top: 2px solid #787878; }
.plot { flex: 1; border-right: 1px solid #fff; }
.axis { width: 42px; border-left: 1px solid #696969; }
.plot svg { width: 100%; background: #fff; shape-rendering: crispEdges; }
.axis svg { width: 100%; background: #fff; overflow: hidden; }
.axis text { font-size: 36px; }
.p1 { height: 142px; margin-bottom: 19px; }
.p2 { height: 98px; margin-bottom: 19px; }
.p3 { height: 110px; }
.a1 { height: 145px; } .a2 { height: 101px; } .a3 { height: 94px; }
.panel.strip { height: 13px; margin: 0; }
.strip .white { background: #fff; }
.holdrow { display: flex; justify-content: flex-end; align-items: center; gap: 18px; height: 18px; padding-right: 48px; border-bottom: 1px solid #fff; font-size: 12px; }
.holdrow .h { width: 96px; }
.holdrow button { width: 58px; height: 14px; line-height: 12px; border: 1px solid #d0d0d0; border-radius: 3px; background: #fdfdfd; }
.lists { display: flex; gap: 4px; height: 56px; margin-top: 2px; }
.list { border-top: 2px solid #787878; background: #fff; overflow: hidden; }
.list.left { flex: 1; display: flex; }
.list.left table { flex: 1; align-self: flex-start; }
.list.right { width: 175px; border-left: 1px solid #696969; background: #f0f0f0; }
.inner { height: 36px; margin-right: 16px; background: #fff; overflow: hidden; }
.list .hscroll .h { width: 119px; margin-left: 17px; }
.thumb.short { height: 17px; margin-top: 17px; }
.seg { font-size: 12px; }
.seg th { height: 25px; padding: 0 0 2px 7px; }
.seg td { height: 17px; line-height: 17px; padding-left: 7px; }

.mapwin { background: #fff; }
.maptools { height: 27px; border-bottom: 1px solid #c8c8c8; flex: none; }
.mapgroup { display: flex; align-items: center; width: 440px; height: 27px; border-right: 1px solid #a0a0a0; }
.tool.on { background: #e8f4fc; border: 1px solid #b8dcf0; border-radius: 3px; }
.mapgroup { padding-right: 0; margin-left: -1px; }
.mapgroup .sep { margin: 0 3px 0 2px; }
.mapbody { display: flex; flex: 1; min-height: 0; border-top: 2px solid #787878; background: #f0f0f0; }
.mapcanvas { flex: 1; min-width: 0; height: 100%; }
.maptext { font-size: 11px; }
.side { width: 67px; margin-left: 4px; border-left: 1px solid #696969; padding: 0 8px 0 5px; flex: none; }
.sidetab { display: flex; height: 20px; align-items: center; margin-right: -7px; }
.sidetab span { flex: 1; line-height: 18px; }
.sidetab button { width: 16px; height: 16px; border: 1px solid #a0a0a0; font-size: 11px; line-height: 12px; }
.side h3 { height: 16px; line-height: 16px; white-space: nowrap; }
.box { border: 1px solid #828790; background: #fff; overflow: hidden; display: flex; flex-direction: column; justify-content: space-between; }
.box p { line-height: 18px; white-space: nowrap; padding-left: 1px; }
.box i { display: block; height: 17px; background: #f0f0f0; flex: none; }
.b1 { height: 119px; } .b2 { height: 134px; } .b3 { height: 138px; }
.treerow { display: flex; flex: 1; min-height: 0; overflow: hidden; background: #f0f0f0; }
.treerow ul { width: 34px; list-style: none; background: #fff; overflow: hidden; }
.treerow li { display: flex; align-items: center; height: 16px; line-height: 16px; margin-left: 10px; border-left: 1px dotted #888; white-space: nowrap; }
.treerow li::before { content: ""; width: 8px; margin-right: 4px; border-top: 1px dotted #888; flex: none; }
.treerow li.root { margin: 1px 0 0 3px; border: 0; }
.treerow li.root::before { display: none; }
.treerow b { width: 9px; height: 9px; margin: 0 8px 0 -17px; border: 1px solid #999; background: #fff; font-size: 9px; line-height: 7px; text-align: center; flex: none; }
.thumb.tree { height: 53px; margin-top: 18px; }

.watermark { position: absolute; left: 834px; top: 818px; width: 250px; height: 101px; overflow: hidden; color: #a8a8a8; opacity: .35; text-align: center; pointer-events: none; }
.watermark strong { display: block; font: bold 62px/96px "DejaVu Sans", sans-serif; height: 83px; }
.watermark em { display: block; font: bold 38px/32px "Open Sans", sans-serif; color: #fff; }

.tabs { display: flex; height: 19px; background: #c0c0c0; border-top: 1px solid #000; padding-left: 2px; font-family: "Liberation Sans", Arial, sans-serif; font-size: 13px; }
.tabs button { height: 17px; padding: 0 6px; margin-right: 1px; border: 1px solid #000; border-top: 0; border-left-color: #fff; border-radius: 0 0 5px 2px; background: #f0f0f0; line-height: 17px; }
.tabs .active { background: #ababab; }
.status { display: flex; align-items: center; height: 23px; background: #f0f0f0; border-top: 2px solid #a0a0a0; border-bottom: 2px solid #0a2846; padding: 0 2px; }
.status .help { flex: 1; }
.status .rec { width: 221px; margin-left: 15px; padding-left: 5px; border-left: 1px solid #d0d0d0; }
.status .num { margin-right: 4px; }
.status .block { width: 36px; height: 16px; background: #c0c0c0; }
</style>
